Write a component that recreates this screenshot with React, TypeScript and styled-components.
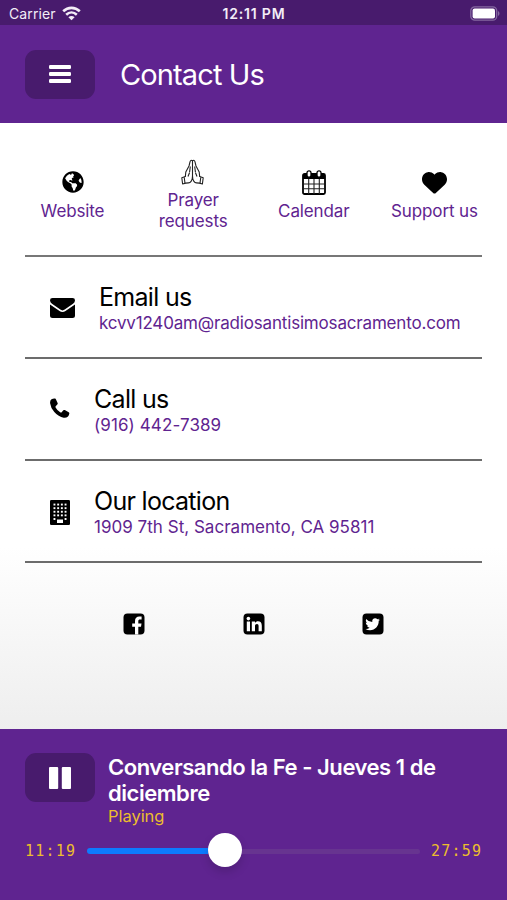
import React from 'react';
import styled, { createGlobalStyle } from 'styled-components';
import { FaGlobeAmericas } from 'react-icons/fa';
import { FaHeart } from 'react-icons/fa6';

const purple = '#5f2490';
const deep = '#481b6d';
const gold = '#ecbd2e';

const GlobalStyle = createGlobalStyle`
  *, *::before, *::after { box-sizing: border-box; }
  body { margin: 0; font-family: Inter, "Liberation Sans", sans-serif; }
  svg { display: block; }
`;

const Screen = styled.div`
  width: 507px;
  height: 900px;
  display: flex;
  flex-direction: column;
  overflow: hidden;
  background: #fff;
`;

const StatusBar = styled.div`
  height: 25px;
  flex: none;
  display: grid;
  grid-template-columns: 1fr auto 1fr;
  align-items: center;
  padding: 2px 7px 0 9px;
  background: ${deep};
  color: #f3edf7;
  font-size: 14px;
  line-height: 20px;
`;

const Carrier = styled.div`
  display: flex;
  align-items: center;
  gap: 6px;
  letter-spacing: 0.1px;
`;

const Clock = styled.div`
  font-weight: 600;
  letter-spacing: 0.8px;
  padding-right: 1px;
`;

const BatterySlot = styled.div`
  display: flex;
  justify-content: flex-end;
`;

const Header = styled.header`
  height: 98px;
  flex: none;
  display: flex;
  align-items: center;
  gap: 25px;
  padding: 0 25px;
  background: ${purple};
  color: #fff;
`;

const SquareButton = styled.button`
  width: 70px;
  height: 49px;
  flex: none;
  display: flex;
  align-items: center;
  justify-content: center;
  padding: 0;
  border: 0;
  border-radius: 11px;
  background: ${deep};
  color: #fff;
`;

const PageTitle = styled.h1`
  margin: 0;
  padding-top: 2px;
  font-size: 29px;
  font-weight: 400;
  line-height: 36px;
  letter-spacing: -0.88px;
`;

const Main = styled.main`
  flex: 1;
  display: flex;
  flex-direction: column;
  padding: 0 25px;
  background: linear-gradient(#fff 0, #fff 70%, #eee 100%);
  color: #000;
`;

const Shortcuts = styled.nav`
  height: 134px;
  display: flex;
  justify-content: space-between;
  align-items: center;
  padding: 13px 3px 0 3px;
  border-bottom: 2px solid #777;
`;

const Shortcut = styled.a`
  width: 89px;
  display: flex;
  flex-direction: column;
  align-items: center;
  color: ${purple};
  font-size: 17px;
  line-height: 21px;
  text-align: center;
  letter-spacing: -0.12px;
  white-space: nowrap;
`;

const ShortcutIcon = styled.span`
  height: 25px;
  margin-bottom: 6px;
  display: flex;
  align-items: center;
  color: #000;
`;

const ContactRow = styled.section`
  height: 102px;
  display: flex;
  align-items: center;
  gap: 24px;
  padding: 2px 0 0 25px;
  border-bottom: 2px solid #6c6c6c;
`;

const ContactName = styled.h2`
  margin: 0;
  font-size: 25px;
  font-weight: 400;
  line-height: 28px;
  letter-spacing: -0.7px;
`;

const ContactValue = styled.div<{ $tracking: number }>`
  padding-top: 1px;
  margin-bottom: -1px;
  color: ${purple};
  font-size: 17px;
  line-height: 22px;
  letter-spacing: ${p => p.$tracking}px;
`;

const Social = styled.div`
  display: flex;
  justify-content: space-between;
  padding: 50px 73px 0 73px;
  height: 100px;
  & > a { width: 72px; display: flex; justify-content: center; }
`;

const Player = styled.footer`
  height: 171px;
  flex: none;
  padding: 24px 25px 0;
  background: ${purple};
  color: #fff;
`;

const NowPlaying = styled.div`
  display: flex;
  gap: 13px;
`;

const TrackTitle = styled.div`
  padding-top: 1px;
  font-size: 22px;
  font-weight: 600;
  line-height: 26px;
  letter-spacing: -0.46px;
`;

const TrackState = styled.div`
  color: ${gold};
  font-size: 16.5px;
  line-height: 20px;
  letter-spacing: -0.05px;
  padding-bottom: 1px;
`;

const Timeline = styled.div`
  height: 34px;
  display: flex;
  align-items: center;
  gap: 11px;
  margin-top: 6px;
`;

const Time = styled.span`
  width: 51px;
  flex: none;
  padding-top: 1px;
  color: ${gold};
  font-family: "DejaVu Sans Mono", monospace;
  font-size: 15px;
  letter-spacing: 1.2px;
  white-space: nowrap;
`;

const Slider = styled.div`
  flex: 1;
  display: flex;
  align-items: center;
`;

const Played = styled.div`
  flex: none;
  height: 6px;
  margin-top: 2px;
  border-radius: 3px 0 0 3px;
  background: #0d7bff;
`;

const Remaining = styled.div`
  flex: 1;
  height: 5px;
  margin-top: 2px;
  border-radius: 0 3px 3px 0;
  background: #673490;
`;

const Knob = styled.div`
  width: 34px;
  height: 34px;
  flex: none;
  border-radius: 50%;
  background: #fff;
  box-shadow: 0 5px 10px rgba(0, 0, 0, 0.15);
`;

const WifiIcon = () => (
  <svg width="19" height="15" viewBox="0 0 19 15" fill="none" stroke="#f3edf7" strokeWidth="2.6">
    <path d="M1.2 5.3C6 .7 13 .7 17.8 5.3" />
    <path d="M4.2 8.7c3.1-2.900 7.500-2.900 10.600 0" />
    <path d="M9.5 14.300 6.400 11.300c1.800-1.700 4.400-1.700 6.200 0z" fill="#f3edf7" stroke="none" />
  </svg>
);

const BatteryIcon = () => (
  <svg width="30" height="15" viewBox="0 0 30 15">
    <rect x=".8" y=".8" width="25.900" height="13.4" rx="4" fill="none" stroke="#8568a0" strokeWidth="1.3" />
    <rect x="2.600" y="2.6" width="22.4" height="9.8" rx="2" fill="#fff" />
    <path d="M28 5v5c2-1 2-4 0-5z" fill="#8568a0" />
  </svg>
);

const MenuIcon = () => (
  <svg width="22" height="20" viewBox="0 0 22 20" fill="#fff">
    <rect y="1" width="22" height="4" rx="1.2" />
    <rect y="8" width="22" height="4" rx="1.2" />
    <rect y="15" width="22" height="4" rx="1.2" />
  </svg>
);

const PauseIcon = () => (
  <svg width="22" height="22" viewBox="0 0 22 22" fill="#fff">
    <rect width="9.2" height="22" rx="1" />
    <rect x="12.8" width="9.2" height="22" rx="1" />
  </svg>
);

const PrayerIcon = () => (
  <svg width="24" height="26" viewBox="0 0 24 26" fill="none" stroke="#222" strokeWidth="1.1" strokeLinejoin="round">
    <path d="M11.500 2v15M11.500 2c-1.2-1.3-2.2-.6-2.500.8L8 7 4.800 13 4.300 18M11.500 2c1.2-1.3 2.2-.6 2.500.8l1 4.200 3.200 6 .500 5" />
    <path d="M9.300 7.500 8.600 13M13.700 7.500l.7 5.500M8.600 13.500 7 17.500M14.400 13.500 16 17.500" />
    <path d="M4.300 17.500.8 18.800l.8 6.200 3-.9 2.900-.2c2 0 4-2.500 4-6.900 0 4.400 2 6.900 4 6.900l2.900.2 3 .9.8-6.200-3.500-1.300" />
    <path d="m3.200 18.200.8 6M19.800 18.200l-.8 6" />
  </svg>
);

const CalendarIcon = () => (
  <svg width="24" height="25" viewBox="0 0 24 25">
    <rect x="1" y="4" width="22" height="20" rx="1.5" fill="#fff" stroke="#000" strokeWidth="1.8" />
    <path d="M1 4h22v5H1z" />
    <path d="M2 14h20M2 18.8h20M6.7 9v15M12 9v15M17.3 9v15" stroke="#222" strokeWidth="1.1" />
    <rect x="5" y=".8" width="4" height="6.4" rx="2" fill="#fff" stroke="#000" strokeWidth="1.3" />
    <rect x="15" y=".8" width="4" height="6.4" rx="2" fill="#fff" stroke="#000" strokeWidth="1.3" />
  </svg>
);

const MailIcon = () => (
  <svg width="25" height="20" viewBox="0 0 25 20">
    <path d="M2.5 0h20Q25 0 25 2.3 25 4.4 23 5.8l-8.3 5.800q-2.200 1.600-4.400 0L2 5.8Q0 4.4 0 2.3 0 0 2.5 0z" />
    <path d="M0 6.5 9.5 13q3 2 6 0L25 6.5v11q0 2.5-2.5 2.5h-20Q0 20 0 17.5z" />
  </svg>
);

const PhoneIcon = () => (
  <svg width="20" height="24" viewBox="0 0 20 24">
    <path d="M1.500 1.300Q3.200.3 5 .500q.7.100 1 .9l1.600 3.500q.4 1-.3 1.700L5.700 8.300q-.4.500-.1 1.100 1.600 3.100 4.900 5 .7.400 1.200-.2l1.600-1.900q.6-.7 1.500-.2l3.900 2.100q.8.400.6 1.300-.3 1.900-1.300 2.900-1.700 1.600-4.300 1.300Q8.500 18.800 4.300 14 .600 9.700.1 5.200-.1 2.500 1.500 1.300z" />
  </svg>
);

const BuildingIcon = () => (
  <svg width="20" height="25" viewBox="0 0 20 25">
    <rect width="20" height="25" rx="1.2" />
    {[3.6, 7.2, 10.8, 14.4].map(y =>
      [3.5, 7.200, 10.900, 14.600].map(x => <rect key={`${x}-${y}`} x={x} y={y} width="1.900" height="1.9" fill="#fff" />)
    )}
    <path d="M3.500 18h1.900v1.900h-1.900zM14.600 18h1.900v1.900h-1.900zM7 19.500h6V23H7z" fill="#fff" />
  </svg>
);

const FacebookIcon = () => (
  <svg width="22" height="22" viewBox="0 0 22 22">
    <rect x=".5" y=".5" width="21" height="21" rx="4" />
    <path d="M12 21.5v-7.8H9.2v-3.2H12V8.2c0-3 1.7-4.6 4.3-4.6h2.3v3h-1.5c-1.400 0-1.800.7-1.800 1.700v2.200h3.200l-.5 3.200h-2.700v7.800z" fill="#fff" />
  </svg>
);

const LinkedInIcon = () => (
  <svg width="22" height="22" viewBox="0 0 22 22">
    <rect x=".5" y=".5" width="21" height="21" rx="4" />
    <g fill="#fff">
      <circle cx="5.4" cy="5.6" r="1.8" />
      <path d="M3.8 8.6H7v9.6H3.8zM8.8 8.6H12v1.3c.7-1 1.700-1.600 3.100-1.600 2.300 0 3.700 1.500 3.700 4.400v5.500h-3.200v-5.100c0-1.300-.5-2.200-1.600-2.200-1.300 0-2 .9-2 2.200v5.100H8.800z" />
    </g>
  </svg>
);

const TwitterIcon = () => (
  <svg width="22" height="22" viewBox="0 0 22 22">
    <rect x=".5" y=".5" width="21" height="21" rx="4" />
    <path
      fill="#fff"
      d="M18.2 6.6q-.6.9-1.5 1.5c.2 5-3.600 9.100-8.600 9.100q-2.500 0-4.600-1.300 2.300.2 4.100-1.200-2.100-.2-2.800-2.100.7.1 1.300-.1-2.300-.6-2.400-3 .6.4 1.300.4-2-1.600-.9-4Q6.600 8.800 10.300 9c-.5-2.200 1-3.700 2.900-3.700q1.300 0 2.200.9 1-.2 1.900-.7-.3 1.100-1.300 1.700.9-.1 2.200-.6z"
    />
  </svg>
);

const shortcuts = [
  { label: <>Website</>, icon: <FaGlobeAmericas size={22} /> },
  { label: <>Prayer<br />requests</>, icon: <PrayerIcon /> },
  { label: <>Calendar</>, icon: <CalendarIcon /> },
  { label: <>Support us</>, icon: <FaHeart size={25} /> },
];

const contacts = [
  { name: 'Email us', value: 'kcvv1240am@radiosantisimosacramento.com', tracking: -0.18, icon: <MailIcon /> },
  { name: 'Call us', value: '(916) 442-7389', tracking: 0.1, icon: <PhoneIcon /> },
  { name: 'Our location', value: '1909 7th St, Sacramento, CA 95811', tracking: 0.02, icon: <BuildingIcon /> },
];

export default function App() {
  return (
    <>
      <GlobalStyle />
      <Screen>
        <StatusBar>
          <Carrier>Carrier <WifiIcon /></Carrier>
          <Clock>12:11 PM</Clock>
          <BatterySlot><BatteryIcon /></BatterySlot>
        </StatusBar>
        <Header>
          <SquareButton aria-label="Menu"><MenuIcon /></SquareButton>
          <PageTitle>Contact Us</PageTitle>
        </Header>
        <Main>
          <Shortcuts>
            {shortcuts.map((s, i) => (
              <Shortcut key={i}>
                <ShortcutIcon>{s.icon}</ShortcutIcon>
                <span>{s.label}</span>
              </Shortcut>
            ))}
          </Shortcuts>
          {contacts.map(c => (
            <ContactRow key={c.name}>
              {c.icon}
              <div>
                <ContactName>{c.name}</ContactName>
                <ContactValue $tracking={c.tracking}>{c.value}</ContactValue>
              </div>
            </ContactRow>
          ))}
          <Social>
            <a aria-label="Facebook"><FacebookIcon /></a>
            <a aria-label="LinkedIn"><LinkedInIcon /></a>
            <a aria-label="Twitter"><TwitterIcon /></a>
          </Social>
        </Main>
        <Player>
          <NowPlaying>
            <SquareButton aria-label="Pause"><PauseIcon /></SquareButton>
            <div>
              <TrackTitle>Conversando la Fe - Jueves 1 de<br />diciembre</TrackTitle>
              <TrackState>Playing</TrackState>
            </div>
          </NowPlaying>
          <Timeline>
            <Time>11:19</Time>
            <Slider>
              <Played style={{ width: 121 }} />
              <Knob />
              <Remaining />
            </Slider>
            <Time>27:59</Time>
          </Timeline>
        </Player>
      </Screen>
    </>
  );
}
